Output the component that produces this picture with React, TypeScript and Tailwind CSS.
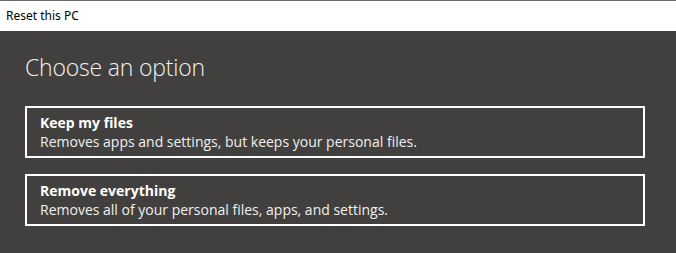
import React from 'react';

const options = [
  { title: 'Keep my files', desc: 'Removes apps and settings, but keeps your personal files.' },
  { title: 'Remove everything', desc: 'Removes all of your personal files, apps, and settings.' },
];

const App: React.FC = () => {
  return (
    <div className="w-[676px] h-[253px] flex flex-col overflow-hidden font-['Open_Sans','Noto_Sans',sans-serif]">
      {/* Title bar */}
      <div className="h-[31px] shrink-0 bg-white border-t border-[#6b6b6b] flex items-center pl-[6px]">
        <span className="text-[12px] text-black font-['Noto_Sans',sans-serif]">Reset this PC</span>
      </div>

      {/* Content */}
      <div className="flex-1 bg-[#41403e] px-[25px] pt-[20px]">
        <h1 className="text-[23px] leading-[32px] font-light text-[#f2f2f2] tracking-[-0.2px]">Choose an option</h1>
        <div className="mt-[23px] flex flex-col gap-[16px] w-[620px]">
          {options.map((o) => (
            <div key={o.title} className="border-2 border-white h-[52px] pl-[13px] pt-[5px]">
              <p className="text-[14px] leading-[19px] font-bold text-white">{o.title}</p>
              <p className="text-[14px] leading-[19px] text-[#f0f0f0]">{o.desc}</p>
            </div>
          ))}
        </div>
      </div>
    </div>
  );
};

export default App;
